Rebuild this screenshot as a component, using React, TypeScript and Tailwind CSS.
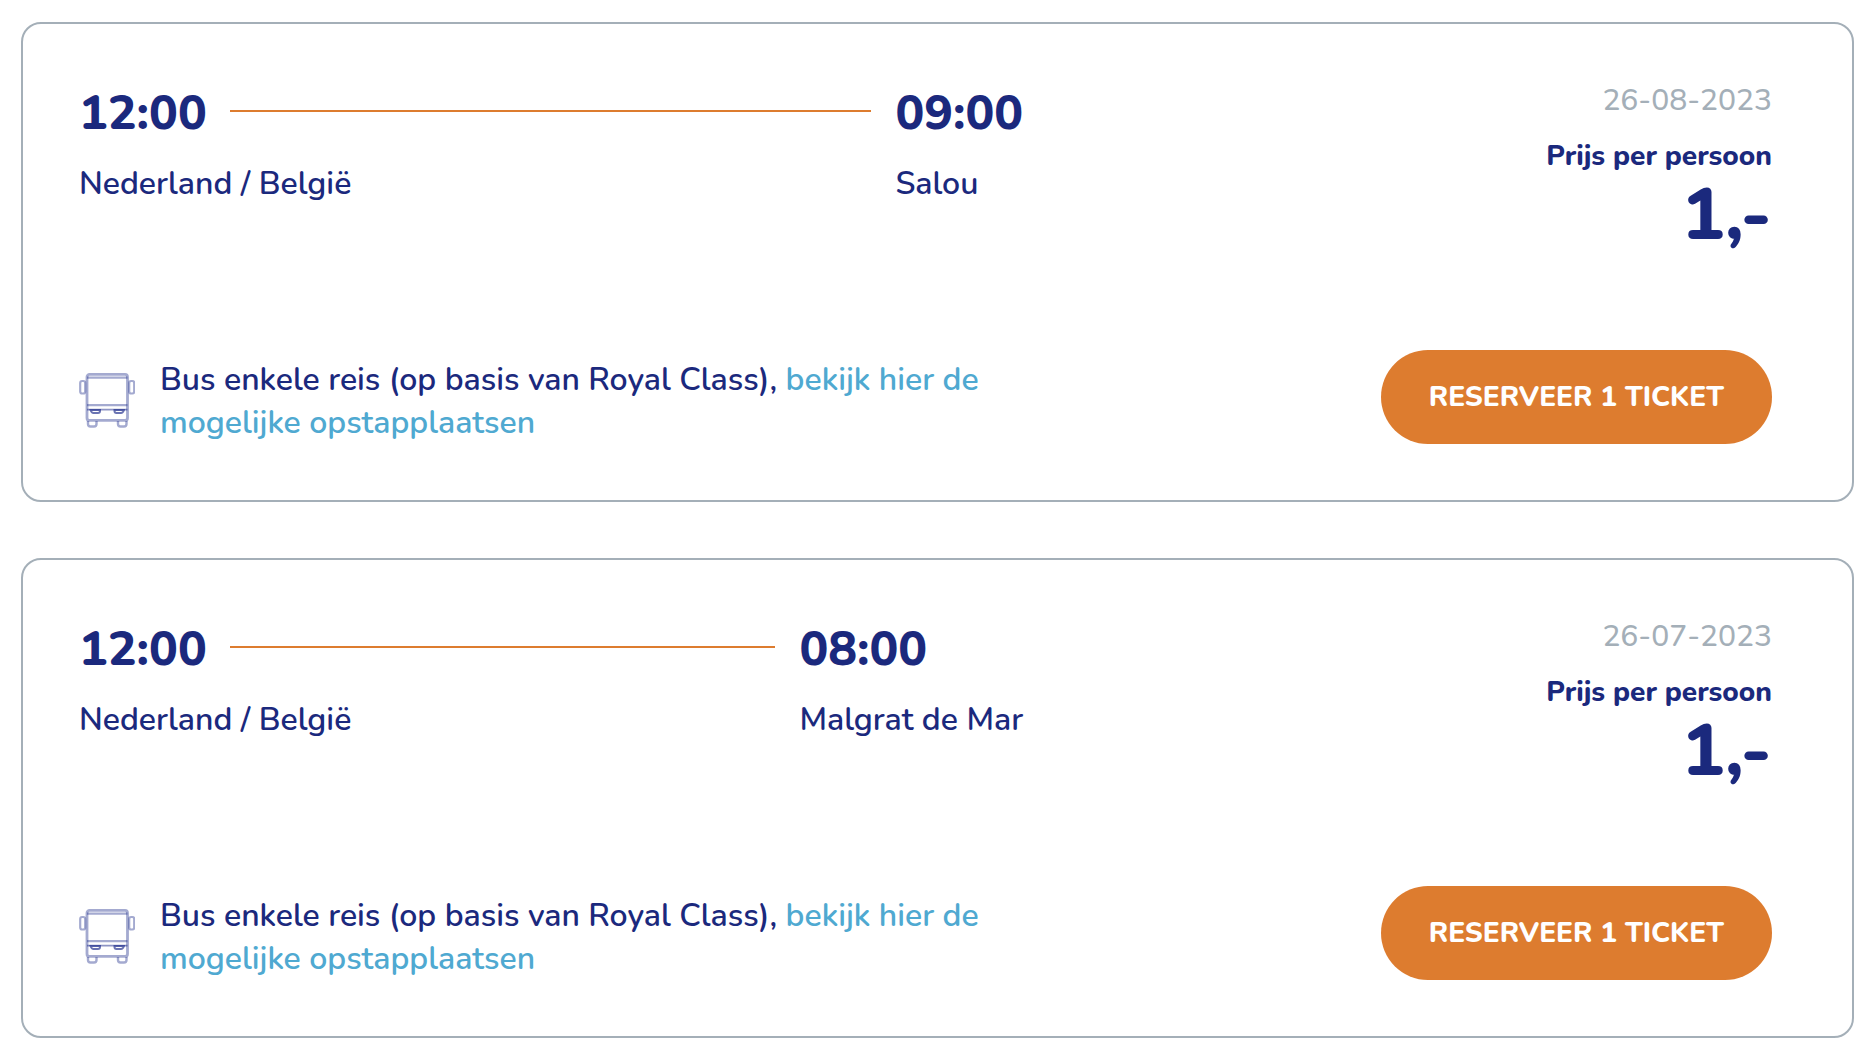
import React from "react";

type Trip = {
  departure: string;
  from: string;
  arrival: string;
  to: string;
  date: string;
  price: string;
};

const trips: Trip[] = [
  {
    departure: "12:00",
    from: "Nederland / België",
    arrival: "09:00",
    to: "Salou",
    date: "26-08-2023",
    price: "1,-",
  },
  {
    departure: "12:00",
    from: "Nederland / België",
    arrival: "08:00",
    to: "Malgrat de Mar",
    date: "26-07-2023",
    price: "1,-",
  },
];

const BusIcon = () => (
  <svg
    viewBox="0 0 56 56"
    fill="none"
    stroke="#1b2a8a"
    strokeOpacity={0.4}
    strokeWidth={2.8}
    className="size-14 shrink-0"
    aria-hidden="true"
  >
    <rect x="8" y="1.4" width="40.5" height="46" rx="2.5" />
    <path d="M8 4.6h40.5M8 32.2h40.5" strokeWidth={2.2} />
    <path d="M8 36.6h40.5" strokeOpacity={0.5} strokeWidth={1.8} />
    <rect x="1.2" y="8" width="5" height="12.5" rx="2" strokeWidth={2.2} />
    <rect x="50.2" y="8" width="5" height="12.5" rx="2" strokeWidth={2.2} />
    <path
      d="M9 48v3q0 2.5 2.5 2.500h3.500q2.500 0 2.500-2.500V48M39 48v3q0 2.500 2.500 2.500h3.500q2.500 0 2.500-2.500V48"
      strokeWidth={2.4}
    />
    <path
      d="M11.500 37h9.500v1q0 2-2 2h-4.500q-2 0-3-3zM45 37h-9.500v1q0 2 2 2h4.500q2 0 3-3z"
      strokeOpacity={0.65}
      strokeWidth={2}
    />
  </svg>
);

const TripCard = ({ trip }: { trip: Trip }) => {
  return (
    <article className="flex justify-between rounded-[20px] border-2 border-[#a4afb8] pt-14 pr-20 pb-14 pl-14">
      <div className="flex w-[56%] flex-col justify-between pr-1">
        {/* Route */}
        <div className="flex">
          <div className="w-[127px] shrink-0">
            <p className="text-5xl leading-[66px] font-extrabold">{trip.departure}</p>
            <p className="mt-4 text-[32px] leading-[43px] font-semibold whitespace-nowrap">
              {trip.from}
            </p>
          </div>
          <div className="mx-6 mt-[30px] h-0.5 grow bg-[#dd7c2f]" />
          <div className="shrink-0">
            <p className="text-5xl leading-[66px] font-extrabold">{trip.arrival}</p>
            <p className="mt-4 text-[32px] leading-[43px] font-semibold">{trip.to}</p>
          </div>
        </div>

        {/* Transport */}
        <div className="flex items-center gap-[25px]">
          <BusIcon />
          <p className="text-[32px] leading-[43px] font-semibold">
            Bus enkele reis (op basis van Royal Class),{" "}
            <a href="#" className="text-[#4fa9d1]">
              bekijk hier de mogelijke opstapplaatsen
            </a>
          </p>
        </div>
      </div>

      {/* Price */}
      <div className="flex flex-col items-end">
        <p className="text-[30px] leading-[42px] font-medium text-[#a4afb8]">{trip.date}</p>
        <p className="mt-[14px] text-[28px] leading-[40px] font-extrabold">Prijs per persoon</p>
        <p className="text-7xl leading-[78px] font-extrabold">{trip.price}</p>
        <button
          type="button"
          className="mt-24 rounded-full bg-[#dd7c2f] px-12 py-[27px] text-[28px] leading-[40px] font-extrabold text-white uppercase"
        >
          Reserveer 1 ticket
        </button>
      </div>
    </article>
  );
};

const App = () => {
  return (
    <main className="flex min-h-screen flex-col gap-14 bg-white pt-[22px] pr-4 pb-4 pl-[21px] font-['Nunito','Lato','Open_Sans',sans-serif] text-[#1b297d]">
      {trips.map((trip) => (
        <TripCard key={trip.date} trip={trip} />
      ))}
    </main>
  );
};

export default App;
